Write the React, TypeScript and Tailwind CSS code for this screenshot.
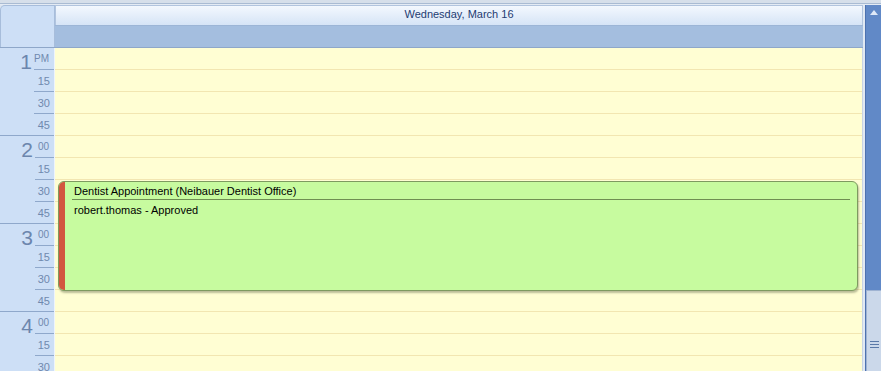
import React from "react";

const hours = ["1", "2", "3", "4"];

function HourBlock({ h, first }: { h: string; first: boolean }) {
  return (
    <div className="h-[88px] shrink-0 flex border-b border-[#8fa8cb]">
      <div className="w-[35px] flex justify-end pr-[2px] pt-[3px] text-[21px] leading-[21px] text-[#6c86ad]">
        {h}
      </div>
      <div className="flex-1 flex flex-col text-[#7089ae]">
        <div className="h-[22px] border-b border-[#8fa8cb] text-[10px] leading-[10px] text-right pr-[5px] pt-[6px]">
          {first ? "PM" : "00"}
        </div>
        <div className="h-[22px] border-b border-[#8fa8cb] text-[11px] leading-[11px] text-right pr-[4px] pt-[6px]">15</div>
        <div className="h-[22px] border-b border-[#8fa8cb] text-[11px] leading-[11px] text-right pr-[4px] pt-[6px]">30</div>
        <div className="h-[21px] text-[11px] leading-[11px] text-right pr-[4px] pt-[6px]">45</div>
      </div>
    </div>
  );
}

export default function App() {
  const slots = Array.from({ length: 16 });

  return (
    <div className="w-[881px] h-[371px] overflow-hidden flex flex-col bg-[#dde6f1] font-['Liberation_Sans',Arial,sans-serif]">
      <div className="h-[5px] shrink-0 flex flex-col">
        <div className="h-[3px] bg-[#d6dfea]" />
        <div className="h-[1px] bg-[#a9bbd3]" />
        <div className="h-[1px] bg-[#e4ebf4]" />
      </div>

      <div className="flex flex-1 min-h-0">
        {/* calendar */}
        <div className="w-[863px] flex flex-col min-h-0">
          <div className="h-[43px] shrink-0 flex border-b border-[#8ea7c9]">
            <div className="w-[55px] rounded-tl-[5px] bg-[#cddff6] border-t border-l border-r border-[#a7bddb]" />
            <div className="flex-1 flex flex-col">
              <div className="h-[20px] border border-b-0 border-[#b1c4de] bg-gradient-to-b from-[#f3f8fe] to-[#d6e4f6] text-center text-[11px] leading-[13px] pt-[2px] text-[#1f3c72]">
                Wednesday, March 16
              </div>
              <div className="flex-1 bg-[#a4bedf] border-t border-[#9cb5d6]" />
            </div>
          </div>

          <div className="flex flex-1 min-h-0 overflow-hidden">
            {/* time ruler */}
            <div className="w-[55px] shrink-0 flex">
              <div className="w-[54px] bg-[#cddff6] flex flex-col">
                {hours.map((h, i) => (
                  <HourBlock key={h} h={h} first={i === 0} />
                ))}
              </div>
              <div className="w-[1px] bg-[#eef4fc]" />
            </div>

            {/* day column */}
            <div className="flex-1 relative bg-[#fffed3] border-r border-[#c9d5e4]">
              {slots.map((_, i) => (
                <div key={i} className="h-[22px] border-b border-[#f2e6b1]" />
              ))}

              <div className="absolute left-[3px] right-[4px] top-[133px] h-[110px] flex overflow-hidden rounded-[6px] border border-[#7e9a60] bg-[#c7fb9f] shadow-[1px_2px_2px_rgba(60,70,40,0.35)]">
                <div className="w-[6px] shrink-0 bg-[#d2563f]" />
                <div className="flex-1 pl-[7px] pr-[7px] pt-[3px] text-black">
                  <div className="text-[11px] leading-[13px] pl-[2px] pb-[1px] border-b border-[#6f8e52]">
                    Dentist Appointment (Neibauer Dentist Office)
                  </div>
                  <div className="text-[11px] leading-[13px] pl-[2px] pt-[4px]">robert.thomas - Approved</div>
                </div>
              </div>
            </div>
          </div>
        </div>

        <div className="w-[2px] bg-[#e1e9f3]" />

        {/* scrollbar */}
        <div className="w-[16px] flex flex-col border-l border-[#4d72b0] bg-[#6189c7]">
          <div className="h-[14px] shrink-0 flex items-center justify-center">
            <svg width="8" height="5" viewBox="0 0 8 5">
              <path d="M0 5 L4 0 L8 5 Z" fill="#dfe9f7" />
            </svg>
          </div>
          <div className="h-[271px] shrink-0" />
          <div className="flex-1 bg-[#cbd8ea] border-t border-l border-[#9fb3d2] flex flex-col items-center pt-[50px] gap-[2px]">
            <div className="w-[9px] h-[1px] bg-[#5a79a8]" />
            <div className="w-[9px] h-[1px] bg-[#5a79a8]" />
            <div className="w-[9px] h-[1px] bg-[#5a79a8]" />
          </div>
        </div>
      </div>
    </div>
  );
}
